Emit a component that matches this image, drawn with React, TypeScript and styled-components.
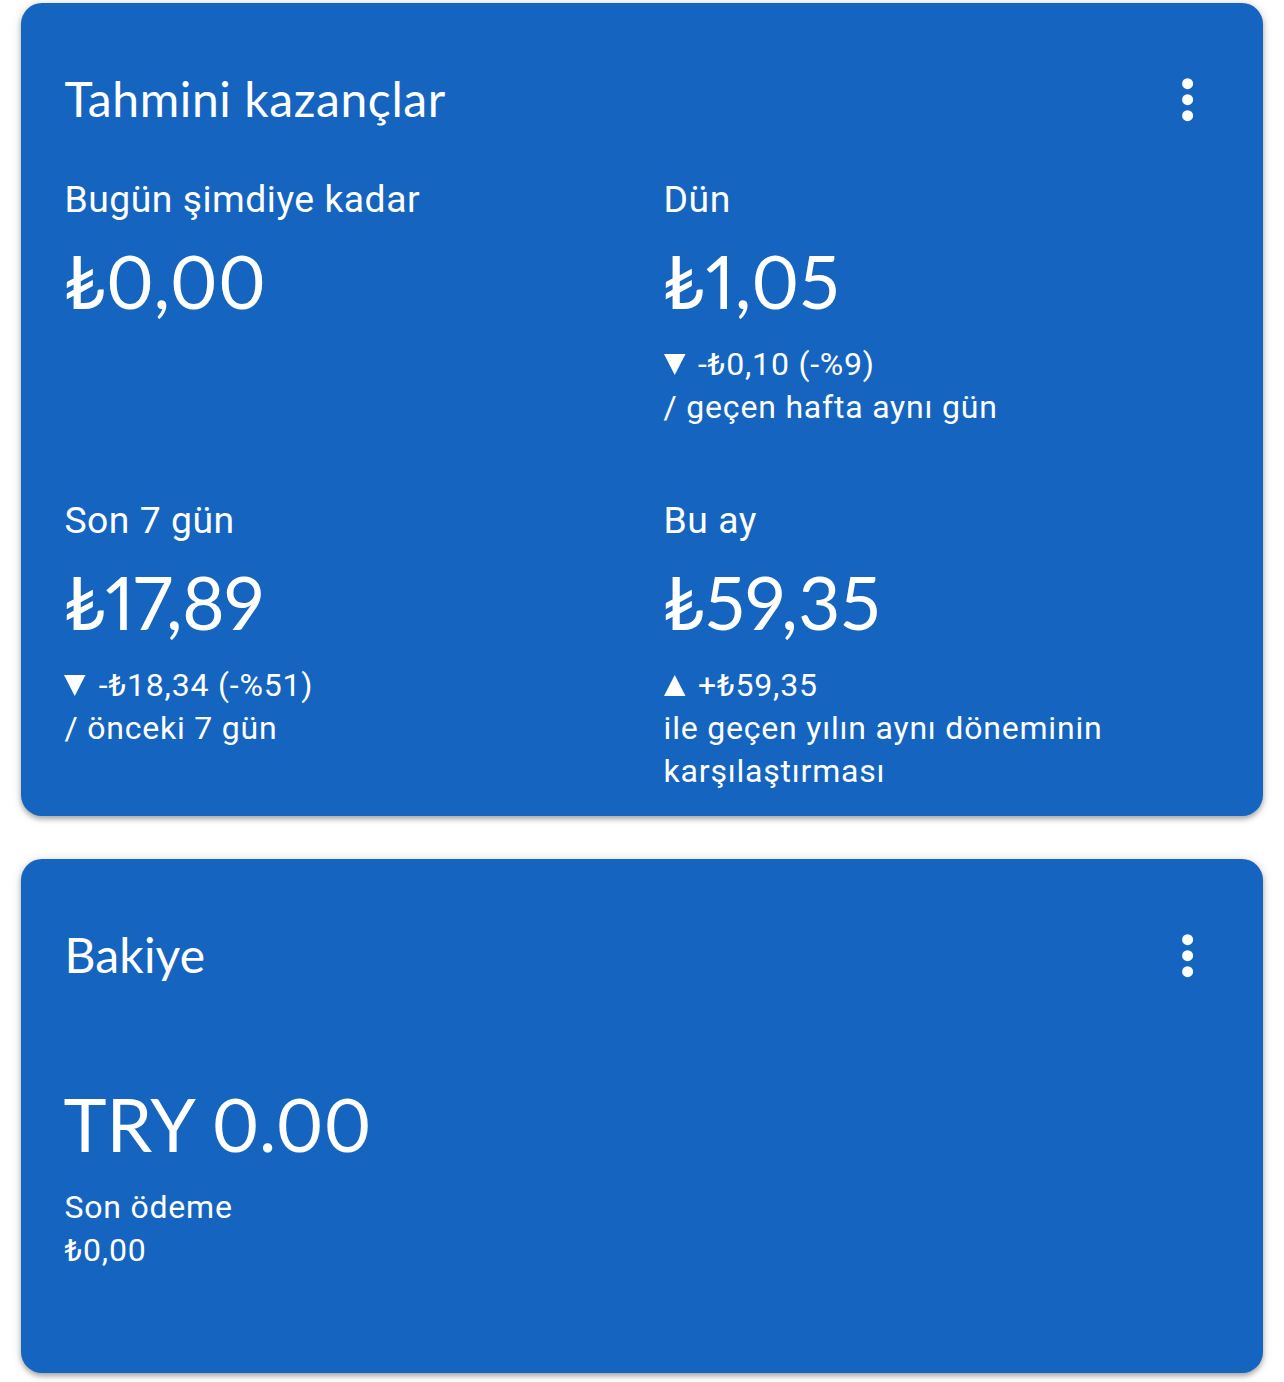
import * as React from 'react';
import styled, { createGlobalStyle } from 'styled-components';

const $blue = '#1565c0';
const $titleFont = "Lato, 'Open Sans', sans-serif";

const GlobalStyle = createGlobalStyle`
    * {
        box-sizing: border-box;
    }

    body {
        margin: 0;
        background: #fff;
        font-family: Roboto, 'Noto Sans', sans-serif;
        color: #fff;
    }
`;

const Page = styled.main`
    display: flex;
    flex-direction: column;
    gap: 43px;
    height: 1382px;
    padding: 3px 21px 0;
    overflow: hidden;
`;

const Card = styled.section<{ $height: number }>`
    height: ${({ $height }) => $height}px;
    padding: 65px 43px 0 43.4px;
    border-radius: 21px;
    background: ${$blue};
    box-shadow:
        0 3px 5px rgba(0, 0, 0, 0.28),
        0 1px 11px rgba(0, 0, 0, 0.14);
`;

const CardHead = styled.header`
    display: flex;
    align-items: center;
    justify-content: space-between;
    height: 64px;
`;

const Title = styled.h2<{ $spacing: number }>`
    margin: 0;
    padding-bottom: 3px;
    font: 400 48px/64px ${$titleFont};
    letter-spacing: ${({ $spacing }) => $spacing}px;
`;

const MenuButton = styled.button`
    width: 64px;
    height: 64px;
    padding: 0;
    border: 0;
    background: none;
    color: #fff;

    svg {
        display: block;
    }
`;

const Grid = styled.div`
    display: grid;
    grid-template-columns: 599.2px 1fr;
    grid-template-rows: 321px auto;
    padding-top: 42px;
`;

const Balance = styled.div`
    padding-top: 79px;
`;

const Label = styled.div`
    font-size: 37.3px;
    line-height: 50px;
    letter-spacing: 0.52px;
`;

const Amount = styled.div<{ $spacing?: number }>`
    margin: 14px 0 0 -1px;
    font: 400 73px/86px ${$titleFont};
    font-variant-numeric: proportional-nums;
    letter-spacing: ${({ $spacing = 0 }) => $spacing}px;
    white-space: nowrap;
`;

const Details = styled.div`
    margin-top: 19px;
    font-size: 32px;
    line-height: 43px;
    letter-spacing: 0.8px;
`;

const Change = styled.div`
    display: flex;
    align-items: center;
    gap: 12.4px;
`;

const Dots = () => (
    <svg width="64" height="64" viewBox="0 0 64 64" fill="currentColor">
        <circle cx="31.6" cy="15.7" r="5.5" />
        <circle cx="31.6" cy="31.7" r="5.5" />
        <circle cx="31.6" cy="47.7" r="5.5" />
    </svg>
);

const Arrow = ({ up }: { up?: boolean }) => (
    <svg width="22" height="21" viewBox="0 0 22 21" fill="currentColor">
        <path d={up ? 'M0 21h21.5L10.75 0z' : 'M0 0h21.5L10.75 21z'} />
    </svg>
);

type MetricProps = {
    label: string;
    amount: string;
    spacing?: number;
    change?: string;
    up?: boolean;
    children?: React.ReactNode;
};

function Metric({ label, amount, spacing, change, up, children }: MetricProps) {
    return (
        <div>
            <Label>{label}</Label>
            <Amount $spacing={spacing}>{amount}</Amount>
            {change && (
                <Details>
                    <Change>
                        <Arrow up={up} />
                        {change}
                    </Change>
                    {children}
                </Details>
            )}
        </div>
    );
}

function Head({ title, spacing = 0 }: { title: string; spacing?: number }) {
    return (
        <CardHead>
            <Title $spacing={spacing}>{title}</Title>
            <MenuButton>
                <Dots />
            </MenuButton>
        </CardHead>
    );
}

function App() {
    return (
        <Page>
            <GlobalStyle />
            <Card $height={813}>
                <Head title="Tahmini kazançlar" spacing={0.6} />
                <Grid>
                    <Metric label="Bugün şimdiye kadar" amount="₺0,00" spacing={0.3} />
                    <Metric label="Dün" amount="₺1,05" spacing={0.5} change="-₺0,10 (-%9)">
                        / geçen hafta aynı gün
                    </Metric>
                    <Metric label="Son 7 gün" amount="₺17,89" spacing={-0.6} change="-₺18,34 (-%51)">
                        / önceki 7 gün
                    </Metric>
                    <Metric label="Bu ay" amount="₺59,35" spacing={0.4} change="+₺59,35" up>
                        ile geçen yılın aynı döneminin
                        <br />
                        karşılaştırması
                    </Metric>
                </Grid>
            </Card>
            <Card $height={514}>
                <Head title="Bakiye" spacing={0.2} />
                <Balance>
                    <Amount>TRY 0.00</Amount>
                    <Details>
                        Son ödeme
                        <br />
                        ₺0,00
                    </Details>
                </Balance>
            </Card>
        </Page>
    );
}

export default App;
